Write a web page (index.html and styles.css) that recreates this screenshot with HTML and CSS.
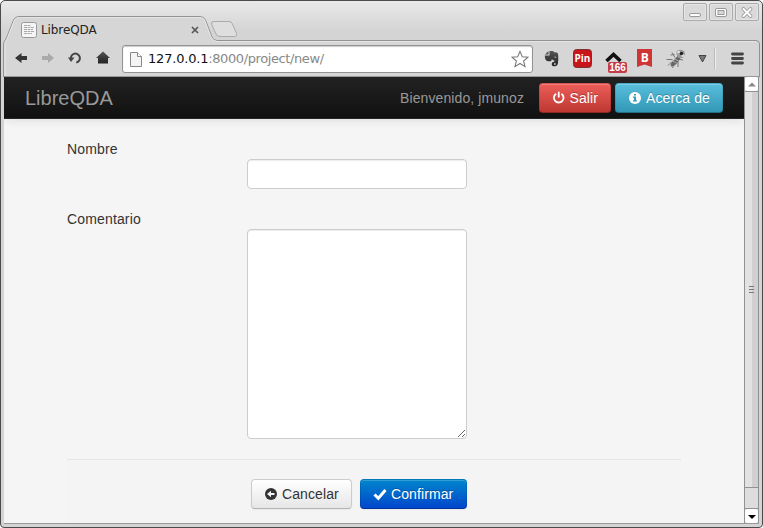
FILE: index.html
```
<!DOCTYPE html>
<html lang="es">
<head>
<meta charset="utf-8">
<title>LibreQDA</title>
<link rel="stylesheet" href="styles.css">
</head>
<body>
<div class="window">
  <header class="tabstrip">
    <svg class="tabshape" width="761" height="76" viewBox="1 1 761 76">
      <path d="M3.5 77V44Q4 41 6 39L13.500 20Q15 16.500 19 16.500H200Q204 16.500 205.500 20L212 37Q213.500 40.500 217 40.500H756Q759.500 40.500 759.500 44V77Z" fill="#d6d6d6" stroke="#929292"/>
      <path d="M5 77V44L14.500 20Q16 17.500 19 17.500H200Q203 17.500 204.500 20L211 37Q213 41.500 217 41.500H756" fill="none" stroke="#e9e9e9" stroke-width=".8"/>
      <path d="M214 21.500H229Q231.500 21.500 232.500 24L236.500 33.500Q237.500 36.500 234 36.500H220Q217 36.500 216 34L211.500 24Q211 21.500 214 21.500Z" fill="#dedede" stroke="#aaa"/>
    </svg>
    <div class="tab">
      <svg class="favicon" width="16" height="16" viewBox="0 0 16 16"><rect x=".5" y=".5" width="15" height="15" rx="2" fill="#f5f5f5" stroke="#999"/><path d="M3 3.500h7M3 5.500h10M3 7.500h9M3 9.500h10M3 11.500h8" stroke="#aaa" stroke-dasharray="3 .5"/></svg>
      <span class="tabname">LibreQDA</span>
      <svg width="8" height="8" viewBox="0 0 8 8"><path d="M1 1l6 6M7 1L1 7" stroke="#555" stroke-width="1.700"/></svg>
    </div>
    <div class="controls">
      <span><svg width="22" height="16"><rect x="5.500" y="9.500" width="11" height="3" rx="1.500" fill="#fff" stroke="#999"/></svg></span>
      <span><svg width="22" height="16"><rect x="5.500" y="4.500" width="11" height="8" rx="1.500" fill="#fff" stroke="#999"/><rect x="8" y="6.500" width="6" height="4" fill="#d8d8d8" stroke="#999"/></svg></span>
      <span><svg width="22" height="16"><path d="M7.500 5l7 7M14.500 5l-7 7" stroke="#999" stroke-width="3.800" stroke-linecap="round"/><path d="M7.500 5l7 7M14.500 5l-7 7" stroke="#fff" stroke-width="2" stroke-linecap="round"/></svg></span>
    </div>
  </header>
  <div class="toolbar">
    <svg class="nav" width="106" height="34" viewBox="4 42 106 34">
      <defs><linearGradient id="ink" x1="0" x2="0" y1="0" y2="1"><stop stop-color="#555"/><stop offset="1" stop-color="#222"/></linearGradient></defs>
      <path d="M15 58l6.500-5v3H27v4h-5.500v3z" fill="#353535"/>
      <path d="M54 58l-6-5v3h-6v4h6v3z" fill="#aaa"/>
      <path d="M71.300 60a4.500 4.500 0 1 1 5 2.500" fill="none" stroke="#444" stroke-width="2"/><path d="M68 57.500h6.500l-3.500 4.500z" fill="#444"/>
      <path d="M103 51.500l7 6.500h-2v5.500H98V58h-2z" fill="url(#ink)"/>
    </svg>
    <div class="address">
      <svg width="12" height="15" viewBox="0 0 12 15"><path d="M.5.500h7l4 4v10H.500z" fill="#f4f4f4" stroke="#888"/><path d="M7.500.500v4h4" fill="#fff" stroke="#888"/></svg>
      <span class="url"><b>127.0.0.1</b>:8000/project/new/</span>
      <svg width="18" height="18" viewBox="0 0 19 18"><path d="M9.500 1l2.400 5.700 6.100.4-4.700 4 1.500 5.900-5.300-3.300L4.200 17l1.500-5.900L1 7.100l6.100-.4z" fill="#fff" stroke="#777" stroke-width="1.100"/></svg>
    </div>
    <svg class="extensions" width="226" height="34" viewBox="533 42 226 34">
      <path d="M545 54.500l3.500-3.500v3.500z" fill="#555"/>
      <path d="M549.500 51h3.500l1.200 1.200 2.600.4q1.200.3 1.400 2.400.4 4.500-.4 9-.6 2.300-3.300 2.300-2.800 0-2.800-2.300 0-2.200 2.600-2.200v-1.300q-2.300 0-2.300-1.800l-.8 2.400q-2 .6-4.200-.2-2-.8-2.300-5.400h4.800z" fill="url(#ink)"/>
      <path d="M554.300 57.500q.7-1.800 2.200 0z" fill="#d6d6d6"/><path d="M554 64h1.700" stroke="#d6d6d6" stroke-width="1.300"/>
      <rect x="573.500" y="49.500" width="18" height="18" rx="3" fill="#c9141a" stroke="#7b3032"/>
      <text x="582.400" y="62.300" class="pin">Pin</text>
      <path d="M606.500 61l7-6.500 7 6.500" fill="none" stroke="#111" stroke-width="3.600"/>
      <rect x="608" y="62" width="19" height="11" rx="2" fill="#c43b4a"/><text x="617.500" y="71" class="badge">166</text>
      <path d="M637 49h15v18l-7.500-2.500L637 67z" fill="#cf3535"/><text x="644.700" y="61.500" class="bmark">B</text>
      <g fill="none" stroke="#777"><path d="M672 52.500l3 5M670.500 55l4-.5M666.500 59.500h6M668 65.500l4-4M672.500 68l2-5M678 67v-6M683 60l-6-1"/></g>
      <path d="M671 66.500q-1.500-3 3-6.500l3.500-4 3 2.500-3 4q-3 4-6.500 4z" fill="#666"/>
      <path d="M672.500 61l4 2M674.500 59l4 2" stroke="#aaa"/>
      <path d="M677 50.500q4.500-2 7.500 1 1.500 4-2 6.500h-4q-3-4-1.500-7.500z" fill="#999"/><circle cx="678.500" cy="52" r="1.500" fill="#ddd"/><circle cx="682.800" cy="55.500" r="1.500" fill="#ddd"/><circle cx="681.500" cy="53.500" r="1.700" fill="#222"/>
      <path d="M699 55.500h7l-3.500 6.500z" fill="#777" stroke="#444"/>
      <path d="M714.500 48v21" stroke="#bbb"/><path d="M715.500 48v21" stroke="#eee"/>
      <path d="M732.500 54h10M732.500 58.500h10M732.500 63h10" stroke="#444" stroke-width="2.800" stroke-linecap="round"/>
    </svg>
  </div>
  <div class="viewport">
    <div class="page">
      <nav class="navbar">
        <a class="brand">LibreQDA</a>
        <span class="welcome">Bienvenido, jmunoz</span>
        <a class="btn danger"><svg width="14" height="14" viewBox="0 0 14 14"><path d="M4.200 2.500a5 5 0 1 0 5.600 0M7 .5v6" fill="none" stroke="#fff" stroke-width="1.900"/></svg>Salir</a>
        <a class="btn info"><svg width="14" height="14" viewBox="0 0 14 14"><circle cx="7" cy="7" r="6" fill="#fff"/><path d="M6 3h2v1.500H6zM5 5.500h3v3.800h1v1.200H5V9.300h1V6.700H5z" fill="#329cb8"/></svg>Acerca de</a>
      </nav>
      <form class="form">
        <label for="nombre">Nombre</label>
        <input id="nombre" type="text">
        <label for="comentario">Comentario</label>
        <textarea id="comentario"></textarea>
        <div class="actions">
          <button type="button" class="btn cancel"><svg width="14" height="14" viewBox="0 0 14 14"><circle cx="7" cy="7" r="6" fill="#333"/><path d="M3 7l4-3.200v2.200h3.500v2H7v2.200z" fill="#f5f5f5"/></svg>Cancelar</button>
          <button type="button" class="btn primary"><svg width="14" height="14" viewBox="0 0 14 14"><path d="M1.500 7.500l3.800 3.700L12.500 3" fill="none" stroke="#fff" stroke-width="3"/></svg>Confirmar</button>
        </div>
      </form>
    </div>
    <div class="scrollbar">
      <div class="arrow"><svg width="13" height="13"><path d="M3 9.500h8l-4-4z" fill="#888"/></svg></div>
      <div class="thumb"><i></i><i></i><i></i></div>
      <div class="track"></div>
      <div class="arrow"><svg width="13" height="13"><path d="M3 6h8l-4 4z" fill="#000"/></svg></div>
    </div>
  </div>
</div>
</body>
</html>
```
FILE: styles.css
```
* { box-sizing: border-box; }
body { margin: 0; background: #fff; overflow: hidden; font: 14px/20px "Liberation Sans", Arial, sans-serif; color: #333; }
.window { position: relative; display: flex; flex-direction: column; width: 763px; height: 528px; border: 1px solid #4c4a4c; border-radius: 5px 5px 4px 4px; background: linear-gradient(#e9e9e9, #d4d4d4 30px); overflow: hidden; }
.tabstrip { display: flex; justify-content: space-between; height: 41px; }
.tabshape { position: absolute; left: 0; top: 0; }
.tab { position: relative; display: flex; align-items: center; width: 200px; height: 22px; margin-top: 18px; padding: 0 2px 0 20px; font: 12px/16px "DejaVu Sans", sans-serif; color: #222; }
.tabname { flex: 1; margin-left: 4px; letter-spacing: -.1px; }
.controls { position: relative; display: flex; gap: 2px; margin: 2px 3px 0 0; height: 18px; }
.controls span { display: flex; width: 24px; height: 18px; border: 1px solid #aaa; border-radius: 2px; background: #dadada; box-shadow: inset 0 0 0 1px #e5e5e5; }
.toolbar { position: relative; display: flex; height: 34px; padding-left: 3px; }
.nav { flex: none; margin-right: 12px; }
.address { display: flex; align-items: center; width: 411px; height: 28px; margin-top: 3px; padding: 0 3px 0 7px; border: 1px solid #929292; border-radius: 3px; background: #fff; box-shadow: inset 0 1px 1px #ccc; font: 13px/18px "DejaVu Sans", sans-serif; color: #888; }
.url { flex: 1; margin-left: 6px; letter-spacing: -.4px; }
.url b { font-weight: 400; color: #111; letter-spacing: -.2px; }
.extensions { flex: none; }
.pin, .badge, .bmark { fill: #fff; text-anchor: middle; font: bold 10px "Open Sans", sans-serif; }
.badge { font: bold 10px "Liberation Sans", sans-serif; }
.bmark { font: bold 12px "Open Sans", sans-serif; }
.viewport { position: relative; display: flex; height: 448px; margin: 0 3px; border-top: 1px solid #999; border-bottom: 1px solid #999; }
.page { width: 740px; background: #f5f5f5; overflow: hidden; }
.navbar { display: flex; align-items: center; height: 42px; padding: 0 21px; border-bottom: 1px solid #252525; background: linear-gradient(#222, #111); box-shadow: 0 1px 10px rgba(0,0,0,.1); color: #999; }
.brand { flex: 1; font-size: 20px; }
.welcome { margin-right: 15px; letter-spacing: .1px; }
.btn { display: flex; align-items: center; gap: 4px; height: 30px; padding: 0 12px; border: 1px solid #ccc; border-bottom-color: #b3b3b3; border-radius: 4px; background: linear-gradient(#fff, #e6e6e6); box-shadow: inset 0 1px 0 rgba(255,255,255,.2), 0 1px 2px rgba(0,0,0,.05); color: #333; font: 14px/20px "Liberation Sans", Arial, sans-serif; letter-spacing: .1px; white-space: nowrap; }
.danger, .info, .primary { color: #fff; text-shadow: 0 -1px 0 rgba(0,0,0,.25); border-color: rgba(0,0,0,.1) rgba(0,0,0,.1) rgba(0,0,0,.25); background-origin: border-box; }
.danger { width: 72px; margin-right: 4px; background-image: linear-gradient(#ee5f5b, #bd362f); }
.info { width: 108px; background-image: linear-gradient(#5bc0de, #2f96b4); }
.cancel { width: 101px; }
.primary { width: 107px; background-image: linear-gradient(#08c, #04c); }
.form { display: flex; flex-direction: column; width: 614px; margin: 20px 0 0 63px; }
.form label { letter-spacing: .15px; }
.form input, .form textarea { display: block; width: 220px; height: 30px; margin: 0 0 20px 180px; border: 1px solid #ccc; border-radius: 4px; background: #fff; box-shadow: inset 0 1px 1px rgba(0,0,0,.075); }
.form textarea { height: 210px; resize: vertical; }
.actions { display: flex; gap: 8px; height: 80px; padding: 19px 0 0 184px; border-top: 1px solid #e5e5e5; background: #f4f4f4; }
.scrollbar { display: flex; flex: none; flex-direction: column; width: 15px; height: 446px; border-left: 1px solid #929292; border-right: 1px solid #929292; background: #ddd; }
.arrow { display: flex; width: 13px; height: 14px; border-radius: 3px; background: #fff; }
.thumb { display: flex; flex-direction: column; justify-content: center; align-items: center; gap: 2px; height: 397px; border: solid #929292; border-width: 1px 0; background: linear-gradient(90deg, #e2e2e2 50%, #d0d0d0 50%); }
.thumb i { width: 5px; height: 1px; background: #777; }
.track { flex: 1; border-bottom: 1px solid #929292; }
```
